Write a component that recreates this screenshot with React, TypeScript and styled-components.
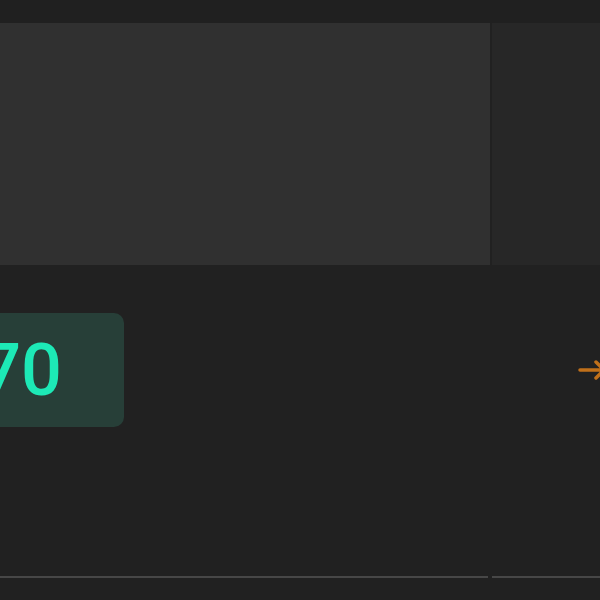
import React from "react";
import styled, { createGlobalStyle } from "styled-components";

const GlobalStyle = createGlobalStyle`
  html, body {
    margin: 0;
    padding: 0;
    background: #212121;
    overflow: hidden;
  }
  body {
    font-family: Roboto, "Liberation Sans", sans-serif;
  }
`;

const Page = styled.div`
  width: 600px;
  height: 600px;
  display: flex;
  flex-direction: column;
  background: #212121;
  overflow: hidden;
`;

const TopBar = styled.div`
  height: 23px;
  background: #202020;
  flex-shrink: 0;
`;

const Panels = styled.div`
  display: grid;
  grid-template-columns: 490px 1fr;
  gap: 2px;
  height: 242px;
  flex-shrink: 0;
`;

const Panel = styled.div<{ $tone: string }>`
  background: ${(p) => p.$tone};
`;

const StatRow = styled.div`
  display: flex;
  align-items: center;
  justify-content: space-between;
  margin-top: 48px;
  height: 114px;
  overflow: hidden;
`;

const Badge = styled.div`
  width: 124px;
  height: 114px;
  box-sizing: border-box;
  background: #273f38;
  border-radius: 0 10px 10px 0;
  display: flex;
  align-items: center;
  justify-content: flex-end;
  padding-right: 62px;
  overflow: hidden;
`;

const Value = styled.span`
  color: #1de9b6;
  font-size: 72px;
  font-weight: 500;
  line-height: 1;
  white-space: nowrap;
  margin-top: 2px;
`;

const Arrow = styled.svg`
  width: 30px;
  height: 30px;
  margin-right: -8px;
  flex-shrink: 0;
`;

const Spacer = styled.div`
  flex: 1;
`;

const Footer = styled.div`
  display: grid;
  grid-template-columns: 488px 1fr;
  gap: 4px;
  height: 24px;
  flex-shrink: 0;
`;

const Rule = styled.div`
  border-top: 2px solid #474747;
`;

export default function App() {
  return (
    <>
      <GlobalStyle />
      <Page>
        <TopBar />
        <Panels>
          <Panel $tone="#303030" />
          <Panel $tone="#272727" />
        </Panels>
        <StatRow>
          <Badge>
            <Value>70</Value>
          </Badge>
          <Arrow viewBox="0 0 30 30" fill="none">
            <path
              d="M2 15 H26 M18 7 L26 15 L18 23"
              stroke="#c0701a"
              strokeWidth="3.5"
              strokeLinecap="round"
              strokeLinejoin="round"
            />
          </Arrow>
        </StatRow>
        <Spacer />
        <Footer>
          <Rule />
          <Rule />
        </Footer>
      </Page>
    </>
  );
}
